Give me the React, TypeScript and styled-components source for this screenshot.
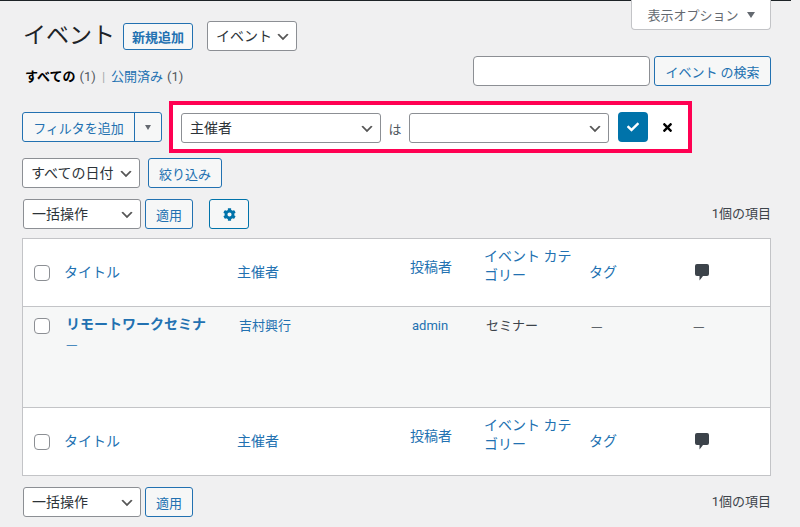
import styled, { createGlobalStyle } from "styled-components";
import { FaCheck, FaCog, FaTimes } from "react-icons/fa";

const colors = {
  link: "#2271b1",
  text: "#3c434a",
  strong: "#1d2327",
  line: "#c3c4c7",
  field: "#8c8f94",
  soft: "#f6f7f7",
  page: "#f0f0f1",
  accent: "#ff0052",
};

const chevron =
  "url(\"data:image/svg+xml,%3Csvg xmlns='http://www.w3.org/2000/svg' width='20' height='20'%3E%3Cpath d='M5 6l5 5 5-5 2 1-7 7-7-7 2-1z' fill='%23555'/%3E%3C/svg%3E\")";

const GlobalStyle = createGlobalStyle`
  html, body {
    margin: 0;
    height: 527px;
    overflow: hidden;
    background: ${colors.page};
    font-family: Roboto, "Noto Sans CJK JP", sans-serif;
    font-size: 13px;
    color: ${colors.text};
  }
`;

const Page = styled.div`
  box-sizing: border-box;
  width: 800px;
  height: 527px;
  padding: 0 29px 0 22px;
`;

const TopBar = styled.div`
  height: 1px;
  width: 791px;
  margin-left: -22px;
  background: ${colors.strong};
`;

const Head = styled.div`
  display: flex;
  justify-content: space-between;
  align-items: flex-start;
  height: 51px;
`;

const TitleGroup = styled.div`
  display: flex;
  align-items: center;
  padding-top: 20px;
`;

const Title = styled.h1`
  margin: 0 8px 0 1px;
  font-size: 23px;
  font-weight: 400;
  line-height: 30px;
  color: ${colors.strong};
`;

const ScreenTab = styled.div`
  box-sizing: border-box;
  width: 140px;
  height: 30px;
  margin-top: -1px;
  display: flex;
  align-items: center;
  justify-content: center;
  gap: 8px;
  background: #fff;
  border: 1px solid ${colors.line};
  border-top: none;
  border-radius: 0 0 4px 4px;
  color: #646970;
`;

const Arrow = styled.span<{ $size: number }>`
  width: 0;
  height: 0;
  border-left: ${(p) => p.$size}px solid transparent;
  border-right: ${(p) => p.$size}px solid transparent;
  border-top: ${(p) => p.$size + 2}px solid #646970;
`;

const Between = styled.div<{ $top: number }>`
  display: flex;
  justify-content: space-between;
  align-items: flex-start;
  margin-top: ${(p) => p.$top}px;
`;

const Views = styled.div`
  box-sizing: border-box;
  height: 30px;
  display: flex;
  gap: 4px;
  padding: 6px 0 0 3px;
  color: #50575e;
  line-height: 30px;
  b {
    color: #000;
    font-weight: 700;
  }
  a {
    color: ${colors.link};
  }
  i {
    font-style: normal;
    color: #a7aaad;
    margin: 0 2px;
  }
`;

const Search = styled.div`
  display: flex;
  gap: 4px;
`;

const SearchInput = styled.input`
  box-sizing: border-box;
  width: 177px;
  height: 30px;
  border: 1px solid ${colors.field};
  border-radius: 4px;
  background: #fff;
`;

const Button = styled.button<{ $width: number; $left?: number }>`
  box-sizing: border-box;
  width: ${(p) => p.$width}px;
  height: 30px;
  margin-left: ${(p) => p.$left ?? 0}px;
  padding: 0;
  display: inline-flex;
  align-items: center;
  justify-content: center;
  background: ${colors.soft};
  border: 1px solid ${colors.link};
  border-radius: 3px;
  color: ${colors.link};
  font: inherit;
  white-space: nowrap;
`;

const AddButton = styled.button`
  box-sizing: border-box;
  width: 70px;
  height: 27px;
  padding: 0;
  background: ${colors.soft};
  border: 1px solid ${colors.link};
  border-radius: 3px;
  color: ${colors.link};
  font: inherit;
  font-weight: 700;
`;

const Select = styled.select<{ $width: number; $left?: number }>`
  box-sizing: border-box;
  width: ${(p) => p.$width}px;
  height: 30px;
  margin-left: ${(p) => p.$left ?? 0}px;
  padding: 0 20px 0 8px;
  appearance: none;
  background: #fff ${chevron} no-repeat right 5px top 55% / 16px 16px;
  border: 1px solid ${colors.field};
  border-radius: 3px;
  color: #2c3338;
  font: inherit;
  font-size: 14px;
`;

const FrameSelect = styled(Select)`
  margin-top: 2px;
`;

const FilterRow = styled.div`
  display: flex;
  align-items: center;
  gap: 7px;
  margin-top: 15px;
`;

const SplitButton = styled.div`
  display: flex;
  box-sizing: border-box;
  width: 140px;
  height: 30px;
  border: 1px solid ${colors.link};
  border-radius: 3px;
  background: ${colors.soft};
  color: ${colors.link};
`;

const SplitLabel = styled.span`
  flex: 1;
  display: flex;
  align-items: center;
  justify-content: center;
  border-right: 1px solid ${colors.link};
`;

const SplitArrow = styled.span`
  width: 26px;
  display: flex;
  align-items: center;
  justify-content: center;
`;

const FilterFrame = styled.div`
  box-sizing: border-box;
  width: 523px;
  height: 52px;
  padding: 8px;
  display: flex;
  align-items: center;
  background: #fff;
  border: 4px solid ${colors.accent};
`;

const IsLabel = styled.span`
  width: 28px;
  margin-top: 2px;
  text-align: center;
  color: #50575e;
`;

const ApplyFilter = styled.button`
  box-sizing: border-box;
  width: 30px;
  height: 30px;
  margin-left: 9px;
  padding: 0;
  display: flex;
  align-items: center;
  justify-content: center;
  background: #0073aa;
  border: none;
  border-radius: 4px;
  color: #fff;
  font-size: 12px;
`;

const CloseFilter = styled.span`
  margin-left: 13px;
  display: flex;
  color: #000;
  font-size: 13px;
`;

const DateRow = styled.div`
  display: flex;
  align-items: center;
  gap: 8px;
  margin-top: 5px;
`;

const Group = styled.div`
  display: flex;
  align-items: center;
`;

const GearButton = styled.button`
  box-sizing: border-box;
  width: 40px;
  height: 30px;
  margin-left: 16px;
  padding: 0;
  display: flex;
  align-items: center;
  justify-content: center;
  background: ${colors.soft};
  border: 1px solid #0073aa;
  border-radius: 3px;
  color: #0073aa;
  font-size: 13px;
`;

const Count = styled.span`
  padding-top: 4px;
  font-size: 13px;
  color: ${colors.text};
`;

const Table = styled.table`
  box-sizing: border-box;
  width: 749px;
  height: 238px;
  margin-top: 9px;
  border: 1px solid ${colors.line};
  border-spacing: 0;
  border-collapse: separate;
  table-layout: fixed;
  background: #fff;
`;

const Col = styled.col<{ $width: number }>`
  width: ${(p) => p.$width}px;
`;

const HeadCell = styled.th<{ $line: "top" | "bottom"; $raise?: number }>`
  height: 68px;
  box-sizing: border-box;
  padding: 0 8px ${(p) => p.$raise ?? 0}px;
  font-size: 14px;
  font-weight: 400;
  line-height: 19px;
  text-align: left;
  color: ${colors.link};
  border-${(p) => p.$line}: 1px solid ${colors.line};
`;

const Cell = styled.td`
  height: 100px;
  box-sizing: border-box;
  padding: 9px 10px;
  vertical-align: top;
  background: ${colors.soft};
  font-size: 13px;
  line-height: 19px;
  color: ${colors.text};
  a {
    color: ${colors.link};
  }
`;

const CheckCell = styled(Cell)`
  padding: 11px 8px;
`;

const TitleCell = styled(Cell)`
  padding-top: 8px;
`;

const CommentCell = styled(Cell)`
  padding-left: 6px;
`;

const RowTitle = styled.strong`
  font-size: 14px;
  font-weight: 700;
  color: ${colors.link};
`;

const Dash = styled.span<{ $color?: string }>`
  font-family: "Noto Sans CJK JP", sans-serif;
  font-size: 13px;
  font-weight: 400;
  color: ${(p) => p.$color ?? colors.text};
`;

const Check = styled.span`
  display: block;
  box-sizing: border-box;
  width: 16px;
  height: 16px;
  margin-left: 3px;
  background: #fff;
  border: 1px solid ${colors.field};
  border-radius: 4px;
`;

const CommentIcon = styled.svg`
  display: block;
`;

function HeaderCells({ line }: { line: "top" | "bottom" }) {
  return (
    <tr>
      <HeadCell $line={line}>
        <Check />
      </HeadCell>
      <HeadCell $line={line}>タイトル</HeadCell>
      <HeadCell $line={line}>主催者</HeadCell>
      <HeadCell $line={line} $raise={11}>
        投稿者
      </HeadCell>
      <HeadCell $line={line} $raise={14}>
        イベント カテゴリー
      </HeadCell>
      <HeadCell $line={line}>タグ</HeadCell>
      <HeadCell $line={line}>
        <CommentIcon width="14" height="17" viewBox="0 0 14 17">
          <path
            d="M2 0h10a2 2 0 0 1 2 2v8a2 2 0 0 1-2 2H8l-3.500 4.500V12H2a2 2 0 0 1-2-2V2a2 2 0 0 1 2-2z"
            fill="#3c434a"
          />
        </CommentIcon>
      </HeadCell>
    </tr>
  );
}

function Bulk() {
  return (
    <Group>
      <Select $width={118} $left={1}>
        <option>一括操作</option>
      </Select>
      <Button $width={48} $left={4}>
        適用
      </Button>
    </Group>
  );
}

export default function App() {
  return (
    <Page>
      <GlobalStyle />
      <TopBar />
      <Head>
        <TitleGroup>
          <Title>イベント</Title>
          <AddButton>新規追加</AddButton>
          <Select $width={90} $left={14}>
            <option>イベント</option>
          </Select>
        </TitleGroup>
        <ScreenTab>
          表示オプション
          <Arrow $size={4} />
        </ScreenTab>
      </Head>

      <Between $top={4}>
        <Views>
          <b>すべての</b> (1) <i>|</i> <a>公開済み</a> (1)
        </Views>
        <Search>
          <SearchInput />
          <Button $width={117}>イベント の検索</Button>
        </Search>
      </Between>

      <FilterRow>
        <SplitButton>
          <SplitLabel>フィルタを追加</SplitLabel>
          <SplitArrow>
            <Arrow $size={3} />
          </SplitArrow>
        </SplitButton>
        <FilterFrame>
          <FrameSelect $width={200}>
            <option>主催者</option>
          </FrameSelect>
          <IsLabel>は</IsLabel>
          <FrameSelect $width={200}>
            <option></option>
          </FrameSelect>
          <ApplyFilter>
            <FaCheck />
          </ApplyFilter>
          <CloseFilter>
            <FaTimes />
          </CloseFilter>
        </FilterFrame>
      </FilterRow>

      <DateRow>
        <Select $width={118}>
          <option>すべての日付</option>
        </Select>
        <Button $width={74}>絞り込み</Button>
      </DateRow>

      <Between $top={11}>
        <Group>
          <Bulk />
          <GearButton>
            <FaCog />
          </GearButton>
        </Group>
        <Count>1個の項目</Count>
      </Between>

      <Table>
        <colgroup>
          <Col $width={33} />
          <Col $width={173} />
          <Col $width={173} />
          <Col $width={74} />
          <Col $width={105} />
          <Col $width={106} />
          <col />
        </colgroup>
        <thead>
          <HeaderCells line="bottom" />
        </thead>
        <tbody>
          <tr>
            <CheckCell>
              <Check />
            </CheckCell>
            <TitleCell>
              <RowTitle>リモートワークセミナ</RowTitle>
              <br />
              <Dash $color={colors.link}>—</Dash>
            </TitleCell>
            <Cell>
              <a>吉村興行</a>
            </Cell>
            <Cell>
              <a>admin</a>
            </Cell>
            <Cell>セミナー</Cell>
            <Cell>
              <Dash>—</Dash>
            </Cell>
            <CommentCell>
              <Dash>—</Dash>
            </CommentCell>
          </tr>
        </tbody>
        <tfoot>
          <HeaderCells line="top" />
        </tfoot>
      </Table>

      <Between $top={11}>
        <Bulk />
        <Count>1個の項目</Count>
      </Between>
    </Page>
  );
}
